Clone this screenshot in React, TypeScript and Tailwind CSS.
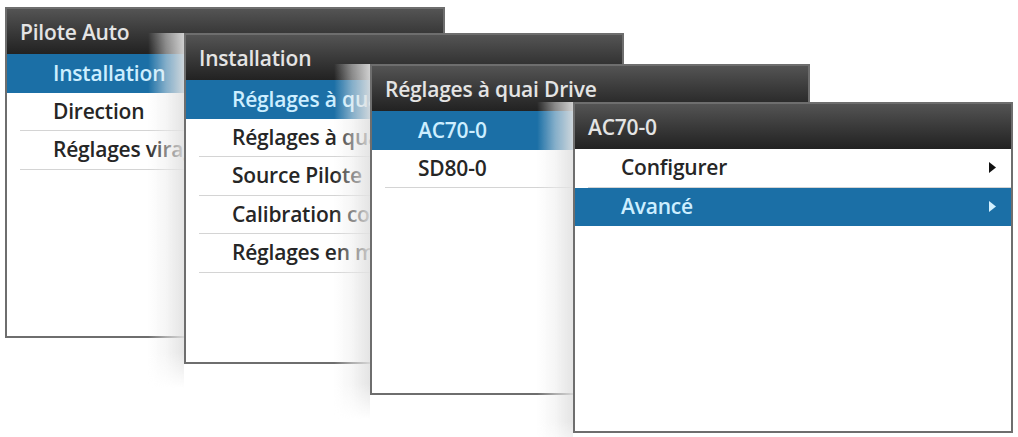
import React from "react";

type Item = { label: string; selected?: boolean; arrow?: boolean };

type MenuWindow = {
  title: string;
  left: number;
  top: number;
  items: Item[];
  shadow?: boolean;
};

const windows: MenuWindow[] = [
  {
    title: "Pilote Auto",
    left: 5,
    top: 7,
    items: [
      { label: "Installation", selected: true },
      { label: "Direction" },
      { label: "Réglages virage" },
    ],
  },
  {
    title: "Installation",
    left: 184,
    top: 33,
    shadow: true,
    items: [
      { label: "Réglages à quai Drive", selected: true },
      { label: "Réglages à quai Pilote" },
      { label: "Source Pilote" },
      { label: "Calibration compas" },
      { label: "Réglages en mer" },
    ],
  },
  {
    title: "Réglages à quai Drive",
    left: 370,
    top: 64,
    shadow: true,
    items: [{ label: "AC70-0", selected: true }, { label: "SD80-0" }],
  },
  {
    title: "AC70-0",
    left: 573,
    top: 102,
    shadow: true,
    items: [
      { label: "Configurer", arrow: true },
      { label: "Avancé", selected: true, arrow: true },
    ],
  },
];

function Arrow({ selected }: { selected?: boolean }) {
  return (
    <svg width="7" height="11" viewBox="0 0 7 11" className="shrink-0">
      <polygon points="0,0 7,5.5 0,11" fill={selected ? "#d4f1ff" : "#111111"} />
    </svg>
  );
}

function MenuPanel({ win }: { win: MenuWindow }) {
  return (
    <div
      className="absolute h-[331px] w-[440px]"
      style={{ left: win.left, top: win.top }}
    >
      {win.shadow && (
        <div className="pointer-events-none absolute right-full top-0 h-[calc(100%+24px)] w-[36px] bg-linear-to-l from-[rgba(226,226,226,0.9)] via-[rgba(236,236,236,0.5)] to-transparent [mask-image:linear-gradient(to_bottom,black_90%,transparent)]" />
      )}
      <div className="flex h-full w-full flex-col overflow-hidden border-2 border-[#6e6e6e] bg-white">
        <div className="flex h-[45px] shrink-0 items-center bg-linear-to-b from-[#545454] to-[#222222] pl-[13px] pt-[3px] text-[21px] font-semibold tracking-[-0.2px] text-[#e4e4e4]">
          <span className="whitespace-nowrap">{win.title}</span>
        </div>
        {win.items.map((item) => (
          <div
            key={item.label}
            className={
              item.selected
                ? "flex h-[38.5px] shrink-0 items-center bg-[#1b6fa6] pl-[46px] pr-[15px] text-[21px] font-semibold tracking-[-0.2px] text-[#cdeeff]"
                : "ml-[13px] flex h-[38.5px] shrink-0 items-center border-b border-[#d4d4d4] pl-[33px] pr-[15px] text-[21px] font-semibold tracking-[-0.2px] text-[#262626]"
            }
          >
            <span className="flex-1 whitespace-nowrap">{item.label}</span>
            {item.arrow && <Arrow selected={item.selected} />}
          </div>
        ))}
      </div>
    </div>
  );
}

export default function App() {
  return (
    <div
      className="relative h-[437px] w-[1018px] overflow-hidden bg-white"
      style={{ fontFamily: '"Open Sans", "Noto Sans", sans-serif' }}
    >
      {windows.map((win) => (
        <MenuPanel key={win.title + win.left} win={win} />
      ))}
    </div>
  );
}
